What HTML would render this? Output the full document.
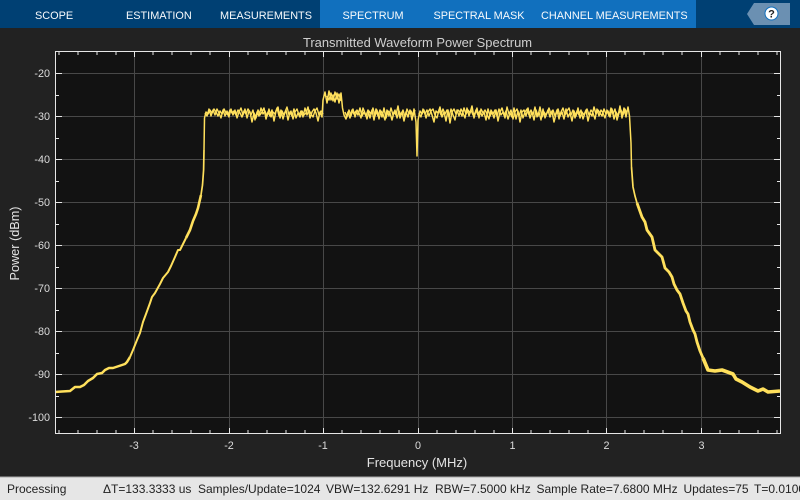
<!DOCTYPE html>
<html><head><meta charset="utf-8"><title>Transmitted Waveform Power Spectrum</title>
<style>
html,body{margin:0;padding:0;width:800px;height:500px;overflow:hidden;background:#222}
svg{display:block;font-family:"Liberation Sans",Arial,sans-serif}
.tab{fill:#f8fafc;font-size:10.9px}
.tk{fill:#dcdcdc;font-size:10.8px}
.st{fill:#222;font-size:12px}
</style></head><body>
<svg width="800" height="500" viewBox="0 0 800 500" xmlns="http://www.w3.org/2000/svg">
<rect width="800" height="500" fill="#222"/>
<rect width="800" height="28" fill="#004073"/>
<rect x="320" width="376" height="28" fill="#1170be"/>
<text class="tab" x="35" y="19">SCOPE</text>
<text class="tab" x="126" y="19">ESTIMATION</text>
<text class="tab" x="220" y="19">MEASUREMENTS</text>
<text class="tab" x="342.5" y="19">SPECTRUM</text>
<text class="tab" x="433.5" y="19">SPECTRAL MASK</text>
<text class="tab" x="541" y="19">CHANNEL MEASUREMENTS</text>
<path d="M754 3H790V25H754L747 14Z" fill="#6b90b2"/>
<circle cx="771.5" cy="13.5" r="6.5" fill="#fff" stroke="#1170be" stroke-width="1"/>
<text x="771.5" y="17.5" text-anchor="middle" font-size="11" font-weight="bold" fill="#222">?</text>

<text x="417.5" y="47" text-anchor="middle" font-size="12.95" fill="#cfcfcf">Transmitted Waveform Power Spectrum</text>

<rect x="55.5" y="51.5" width="725" height="382" fill="#121212"/>
<g stroke="#484848" stroke-width="1" fill="none">
<path d="M134.5 52V433M229.5 52V433M323.5 52V433M418.5 52V433M512.5 52V433M606.5 52V433M701.5 52V433"/>
<path d="M56 73.5H780M56 116.5H780M56 159.5H780M56 202.5H780M56 245.5H780M56 288.5H780M56 331.5H780M56 374.5H780M56 417.5H780"/>
</g>

<g fill="none" stroke="#ffe05c" stroke-linejoin="round">
<path stroke-width="1.5" d="M204 150 L204.5 118 206 112 208 114 210 110 212 113 214 109 216 112 218 116 220 111 222 114 224 109 226 113 228 115 230 110 232 113 234 111 236 115 238 110 240 113 242 117 244 111 246 114 248 109 250 112 252 122 254 113 256 118 258 110 260 115 262 112 264 108 266 119 268 112 270 116 272 110 274 121 276 111 278 107 280 118 282 111 284 115 286 110 288 120 290 112 292 116 294 109 296 118 298 113 300 117 302 111 304 115 306 113 308 107 310 118 312 112 314 109 316 113 318 121 320 112 322 117 323 100 325 92 327 103 329 91 331 100 333 95 335 102 337 93 339 103 341 93 342.5 108 344 115 346 119 348 112 350 118 352 110 354 114 356 111 358 115 360 108 362 116 364 112 366 116 368 110 370 118 372 110 374 120 376 109 378 116 380 110 382 117 384 108 386 118 388 111 390 113 392 120 394 112 396 115 398 106 400 118 402 112 404 121 406 112 408 117 410 110 412 120 414 109 416 122 417 156 418 120 420 111 422 114 424 110 426 118 428 112 430 109 432 115 434 122 436 111 438 113 440 107 442 117 444 112 446 121 448 110 450 123 452 112 454 109 456 114 458 110 460 112 462 116 464 108 466 114 468 110 470 113 472 106 474 118 476 110 478 115 480 111 482 116 484 112 486 120 488 109 490 116 492 112 494 118 496 110 498 121 500 112 502 108 504 115 506 111 508 119 510 113 512 117 514 108 516 119 518 111 520 122 522 112 524 110 526 116 528 108 530 118 532 112 534 120 536 110 538 116 540 107 542 117 544 112 546 115 548 110 550 117 552 111 554 122 556 114 558 109 560 116 562 112 564 119 566 109 568 117 570 113 572 121 574 111 576 116 578 108 580 118 582 112 584 115 586 110 588 121 590 113 592 116 594 107 596 114 598 110 600 113 602 116 604 109 606 114 608 111 610 117 612 109 614 119 616 112 618 116 620 106 622 118 624 108 626 117 628 107 629.5 116 631 143 631.5 167"/>
<path stroke-width="1.4" d="M205 113 L207 116 209 109 211 116 213 110 215 115 217 109 219 113 221 118 223 110 225 116 227 111 229 117 231 109 233 115 235 110 237 118 239 112 241 108 243 115 245 109 247 118 249 111 251 115 253 110 255 120 257 112 259 116 261 108 263 114 265 111 267 116 269 109 271 117 273 112 275 114 277 108 279 116 281 110 283 119 285 112 287 107 289 115 291 111 293 119 295 112 297 109 299 115 301 111 303 117 305 108 307 115 309 110 311 114 313 117 315 111 317 108 319 115 321 111 323 114
M327 96 L329 100 331 93 333 101 335 92 337 99 339 94 341 101
M345 112 L347 117 349 110 351 116 353 109 355 117 357 110 359 113 361 118 363 108 365 113 367 119 369 111 371 114 373 108 375 116 377 110 379 119 381 111 383 114 385 120 387 110 389 116 391 108 393 115 395 110 397 118 399 111 401 115 403 110 405 117 407 109 409 114 411 111 413 116 415 110
M419 113 L421 117 423 109 425 114 427 110 429 116 431 111 433 109 435 115 437 118 439 110 441 115 443 109 445 114 447 110 449 117 451 109 453 115 455 120 457 110 459 116 461 109 463 113 465 118 467 108 469 116 471 110 473 115 475 113 477 108 479 118 481 109 483 113 485 110 487 114 489 119 491 110 493 114 495 110 497 116 499 109 501 115 503 112 505 118 507 107 509 114 511 110 513 119 515 112 517 109 519 116 521 110 523 118 525 112 527 109 529 115 531 110 533 115 535 107 537 117 539 112 541 120 543 109 545 118 547 113 549 108 551 114 553 110 555 116 557 110 559 119 561 112 563 108 565 115 567 111 569 108 571 115 573 110 575 118 577 111 579 115 581 110 583 119 585 113 587 109 589 115 591 110 593 113 595 119 597 109 599 116 601 110 603 113 605 118 607 110 609 116 611 108 613 114 615 109 617 120 619 113 621 110 623 115 625 109 627 114"/>
<path stroke-width="1.7" d="M204 150 L203.6 170 202.5 185 201 195"/>
<path stroke-width="2.6" d="M201 195 L198 208 196 214 193 221 190 230 186 238"/>
<path stroke-width="2" d="M186 238 L183 244 180 250 178 250 175 257 171 266 168 272 163 278 160 284 155 293 152 297 150 303 146 314 143 322 140 333 137 340 133 350 130 357"/>
<path stroke-width="2.5" d="M130 357 L127 362 125 364 119 366 113 368 109 368 105 370 102 373 97 374 93 378 88 381 84 385 80 387 75 387 70 391 62 391.5 55 392"/>
<path stroke-width="1.7" d="M631.5 167 L633 187 635 196 637 203"/>
<path stroke-width="2.8" d="M637 203 L642 217 645 222 647 230 652 237 655 250 658 253 662 257 665 268 669 272 672 277 674 284 677 290 680 294 683 303 686 311 688 314 690 322 693 330 695 334 697 342 700 351 703 358"/>
<path stroke-width="3.6" d="M703 358 L708 370 715 371 722 370 733 374 736 379 742 382 750 387 758 391 763 389 768 392 774 391.5 780 391"/>
</g>

<g stroke="#e6e6e6" stroke-width="1" fill="none">
<path d="M59 52v3M78 52v3M97 52v3M116 52v3M153 52v3M172 52v3M191 52v3M210 52v3M248 52v3M267 52v3M286 52v3M305 52v3M342 52v3M361 52v3M380 52v3M399 52v3M437 52v3M456 52v3M475 52v3M494 52v3M531 52v3M550 52v3M569 52v3M588 52v3M625 52v3M644 52v3M663 52v3M682 52v3M720 52v3M739 52v3M758 52v3M777 52v3"/>
<path d="M59 433v-3M78 433v-3M97 433v-3M116 433v-3M153 433v-3M172 433v-3M191 433v-3M210 433v-3M248 433v-3M267 433v-3M286 433v-3M305 433v-3M342 433v-3M361 433v-3M380 433v-3M399 433v-3M437 433v-3M456 433v-3M475 433v-3M494 433v-3M531 433v-3M550 433v-3M569 433v-3M588 433v-3M625 433v-3M644 433v-3M663 433v-3M682 433v-3M720 433v-3M739 433v-3M758 433v-3M777 433v-3"/>
<path d="M134.5 52v5M229.5 52v5M323.5 52v5M418.5 52v5M512.5 52v5M606.5 52v5M701.5 52v5M134.5 433v-5M229.5 433v-5M323.5 433v-5M418.5 433v-5M512.5 433v-5M606.5 433v-5M701.5 433v-5"/>
<path d="M56 73.5h6M56 116.5h6M56 159.5h6M56 202.5h6M56 245.5h6M56 288.5h6M56 331.5h6M56 374.5h6M56 417.5h6M780 73.5h-6M780 116.5h-6M780 159.5h-6M780 202.5h-6M780 245.5h-6M780 288.5h-6M780 331.5h-6M780 374.5h-6M780 417.5h-6"/>
<path d="M56 95.5h3M56 138.5h3M56 181.5h3M56 224.5h3M56 267.5h3M56 310.5h3M56 353.5h3M56 396.5h3M780 95.5h-3M780 138.5h-3M780 181.5h-3M780 224.5h-3M780 267.5h-3M780 310.5h-3M780 353.5h-3M780 396.5h-3"/>
<rect x="55.5" y="51.5" width="725" height="382"/>
</g>

<g class="tk" text-anchor="end">
<text x="50" y="77">-20</text><text x="50" y="120">-30</text><text x="50" y="163">-40</text><text x="50" y="206">-50</text><text x="50" y="249">-60</text><text x="50" y="292">-70</text><text x="50" y="335">-80</text><text x="50" y="378">-90</text><text x="50" y="421">-100</text>
</g>
<g class="tk" text-anchor="middle">
<text x="134" y="449">-3</text><text x="229" y="449">-2</text><text x="323" y="449">-1</text><text x="418" y="449">0</text><text x="512.5" y="449">1</text><text x="606.5" y="449">2</text><text x="701.5" y="449">3</text>
</g>
<text x="417" y="467" text-anchor="middle" font-size="13" fill="#e4e4e4">Frequency (MHz)</text>
<text transform="translate(19 243.5) rotate(-90)" text-anchor="middle" font-size="12.7" fill="#e4e4e4">Power (dBm)</text>

<rect y="477" width="800" height="23" fill="#e6e6e6"/>
<rect y="476.5" width="800" height="1" fill="#a8a8a8"/>
<text class="st" x="7" y="493">Processing</text>
<text class="st" x="103" y="493">ΔT=133.3333 us</text>
<text class="st" x="198" y="493">Samples/Update=1024</text>
<text class="st" x="326" y="493">VBW=132.6291 Hz</text>
<text class="st" x="435" y="493">RBW=7.5000 kHz</text>
<text class="st" x="536.5" y="493">Sample Rate=7.6800 MHz</text>
<text class="st" x="683.5" y="493">Updates=75</text>
<text class="st" x="754" y="493">T=0.0100</text>
</svg>
</body></html>
